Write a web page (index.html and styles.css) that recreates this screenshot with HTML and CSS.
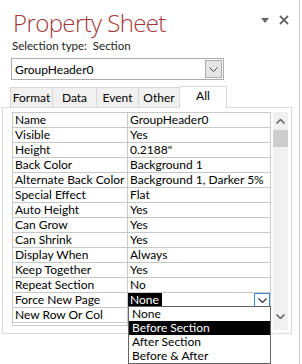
FILE: index.html
```html
<!DOCTYPE html>
<html lang="en">
<head>
    <meta charset="UTF-8">
    <title>Property Sheet</title>
    <link rel="stylesheet" href="styles.css">
</head>
<body>
    <div class="pane">
        <div class="pane-head">
            <h1>Property Sheet</h1>
            <div class="pane-tools">
                <svg width="8" height="5" viewBox="0 0 8 5"><path d="M0 0H8L4 5Z" fill="#666"/></svg>
                <svg width="10" height="10" viewBox="0 0 10 10"><path d="M1 1L9 9M9 1L1 9" stroke="#666" stroke-width="1.8"/></svg>
            </div>
        </div>

        <div class="sel-type">Selection type:&nbsp;&nbsp;Section</div>

        <div class="combo">
            <span class="combo-text">GroupHeader0</span>
            <span class="combo-btn">
                <svg width="9" height="5" viewBox="0 0 9 5"><path d="M0.5 0.5L4.5 4.5L8.5 0.5" fill="none" stroke="#444" stroke-width="1"/></svg>
            </span>
        </div>

        <div class="tabs">
            <div class="tab">Format</div>
            <div class="tab">Data</div>
            <div class="tab">Event</div>
            <div class="tab">Other</div>
            <div class="tab active">All</div>
        </div>

        <div class="tab-body">
            <div class="props">
                <div class="prop-row"><div class="prop-name">Name</div><div class="prop-value">GroupHeader0</div></div>
                <div class="prop-row"><div class="prop-name">Visible</div><div class="prop-value">Yes</div></div>
                <div class="prop-row"><div class="prop-name">Height</div><div class="prop-value">0.2188"</div></div>
                <div class="prop-row"><div class="prop-name">Back Color</div><div class="prop-value">Background 1</div></div>
                <div class="prop-row"><div class="prop-name">Alternate Back Color</div><div class="prop-value">Background 1, Darker 5%</div></div>
                <div class="prop-row"><div class="prop-name">Special Effect</div><div class="prop-value">Flat</div></div>
                <div class="prop-row"><div class="prop-name">Auto Height</div><div class="prop-value">Yes</div></div>
                <div class="prop-row"><div class="prop-name">Can Grow</div><div class="prop-value">Yes</div></div>
                <div class="prop-row"><div class="prop-name">Can Shrink</div><div class="prop-value">Yes</div></div>
                <div class="prop-row"><div class="prop-name">Display When</div><div class="prop-value">Always</div></div>
                <div class="prop-row"><div class="prop-name">Keep Together</div><div class="prop-value">Yes</div></div>
                <div class="prop-row"><div class="prop-name">Repeat Section</div><div class="prop-value">No</div></div>
                <div class="prop-row editing">
                    <div class="prop-name">Force New Page</div>
                    <div class="prop-value">
                        <span class="picked">None</span>
                        <span class="drop-btn">
                            <svg width="9" height="5" viewBox="0 0 9 5"><path d="M0.5 0.5L4.5 4.5L8.5 0.5" fill="none" stroke="#333" stroke-width="1.2"/></svg>
                        </span>
                    </div>
                </div>
                <div class="prop-row"><div class="prop-name">New Row Or Col</div><div class="prop-value"></div></div>
                <div class="prop-row stub"><div class="prop-name"></div><div class="prop-value"></div></div>
            </div>

            <div class="scrollbar">
                <svg class="arrow up" width="9" height="5" viewBox="0 0 9 5"><path d="M0.5 4.5L4.5 0.5L8.5 4.5" fill="none" stroke="#606060" stroke-width="1.5"/></svg>
                <div class="thumb"></div>
                <div class="track"></div>
                <svg class="arrow down" width="9" height="5" viewBox="0 0 9 5"><path d="M0.5 0.5L4.5 4.5L8.5 0.5" fill="none" stroke="#606060" stroke-width="1.5"/></svg>
            </div>
        </div>
    </div>

    <!-- open dropdown of Force New Page -->
    <ul class="drop-list">
        <li>None</li>
        <li class="hot">Before Section</li>
        <li>After Section</li>
        <li>Before &amp; After</li>
    </ul>
</body>
</html>
```

FILE: styles.css
```css
* {
    margin: 0;
    padding: 0;
    box-sizing: border-box;
}

body {
    font-family: Lato, "Liberation Sans", sans-serif;
    font-size: 12px;
    color: #000;
    background: #fff;
    width: 302px;
    height: 364px;
    overflow: hidden;
    position: relative;
}

.pane {
    width: 300px;
    height: 364px;
    border-right: 1px solid #c6c6c6;
    padding: 0 0 0 2px;
}

.pane-head {
    display: flex;
    justify-content: space-between;
    align-items: flex-start;
    height: 38px;
}

.pane-head h1 {
    font-family: "Open Sans", sans-serif;
    font-weight: 300;
    font-size: 24px;
    line-height: 30px;
    color: #a4373a;
    padding: 8px 0 0 11px;
    letter-spacing: -0.6px;
}

.pane-tools {
    display: flex;
    align-items: center;
    gap: 10px;
    padding: 15px 10px 0 0;
}

.sel-type {
    padding-left: 10px;
    height: 20px;
    line-height: 16px;
    font-size: 11.5px;
    color: #222;
}

.combo {
    margin-left: 9px;
    width: 213px;
    height: 22px;
    border: 1px solid #ababab;
    display: flex;
    align-items: center;
    justify-content: space-between;
    padding: 0 1px 0 3px;
    font-size: 12px;
}

.combo-btn {
    width: 17px;
    height: 18px;
    background: #e5e5e5;
    border: 1px solid #acacac;
    display: flex;
    align-items: center;
    justify-content: center;
}

.tabs {
    display: flex;
    align-items: flex-end;
    margin: 5px 0 0 8px;
    height: 22px;
}

.tab {
    height: 20px;
    line-height: 19px;
    text-align: center;
    font-size: 12px;
    background: #f0f0f0;
    border: 1px solid #d9d9d9;
    border-bottom: none;
    margin-right: -1px;
}

.tab:nth-child(1) { width: 43px; }
.tab:nth-child(2) { width: 45px; }
.tab:nth-child(3) { width: 43px; }
.tab:nth-child(4) { width: 42px; }

.tab.active {
    height: 22px;
    width: 48px;
    background: #fff;
    line-height: 18px;
    position: relative;
    top: 1px;
}

.tab-body {
    width: 290px;
    height: 227px;
    border: 1px solid #d9d9d9;
    display: flex;
    gap: 2px;
    padding: 4px 2px 0 9px;
}

.props {
    width: 259px;
    height: 214px;
    border: 1px solid #c8c8c8;
    overflow: hidden;
}

.prop-row {
    display: grid;
    grid-template-columns: 115px 1fr;
    height: 15px;
    line-height: 14px;
    border-bottom: 1px solid #c8c8c8;
    font-size: 12px;
    white-space: nowrap;
}

.prop-name {
    border-right: 1px solid #c8c8c8;
    padding-left: 2px;
}

.prop-value {
    padding-left: 2px;
    display: flex;
    align-items: center;
    justify-content: space-between;
}

.editing .prop-value {
    padding: 0;
}

.picked {
    background: #000;
    color: #fff;
    padding: 0 3px 0 2px;
    height: 14px;
}

.drop-btn {
    width: 16px;
    height: 14px;
    border: 1px solid #3c8ce7;
    display: flex;
    align-items: center;
    justify-content: center;
}

.stub {
    border-bottom: none;
}

.scrollbar {
    width: 15px;
    height: 218px;
    background: #f0f0f0;
    display: flex;
    flex-direction: column;
    align-items: center;
}

.scrollbar .arrow {
    flex: none;
}

.scrollbar .up {
    margin: 7px 0 6px;
}

.scrollbar .down {
    margin-bottom: 11px;
}

.thumb {
    width: 15px;
    height: 17px;
    background: #cdcdcd;
}

.track {
    flex: 1;
}

.drop-list {
    list-style: none;
    position: absolute;
    left: 128px;
    top: 306px;
    width: 143px;
    height: 58px;
    border: 1px solid #646464;
    background: #fff;
    font-size: 12px;
}

.drop-list li {
    height: 14px;
    line-height: 14px;
    padding-left: 3px;
}

.drop-list li.hot {
    background: #000;
    color: #fff;
}
```
